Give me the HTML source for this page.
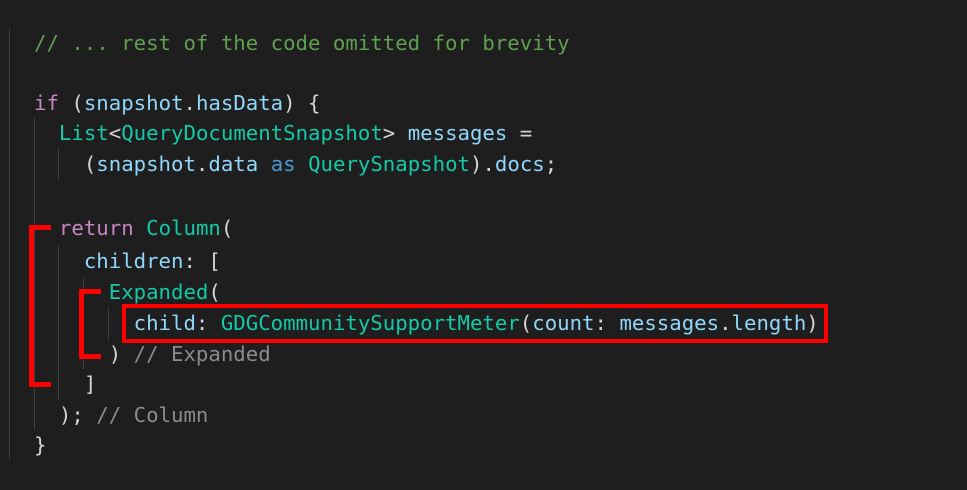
<!DOCTYPE html>
<html><head><style>
body{margin:0;background:#1e1e1e;width:967px;height:490px;overflow:hidden;position:relative;font-family:"DejaVu Sans Mono","Liberation Mono",monospace;font-size:20.7px;}
.l{position:absolute;left:34px;white-space:pre;height:30px;line-height:30px;color:#d4d4d4}
.c{color:#5f9f4f}.g{color:#8b8b8b}.k{color:#c586c0}.v{color:#8fd6fa}.t{color:#14c8a8}.b{color:#4a9ad6}
.ig{position:absolute;width:1px;background:#404040}
.r{position:absolute;background:#f00}
</style></head><body>
<div class="ig" style="left:9px;top:28px;height:432px"></div>
<div class="ig" style="left:34px;top:118px;height:312px"></div>
<div class="ig" style="left:58px;top:148px;height:32px"></div>
<div class="ig" style="left:58px;top:246px;height:154px"></div>
<div class="ig" style="left:83px;top:277px;height:92px"></div>
<div class="ig" style="left:108px;top:308px;height:32px"></div>
<div class="l" style="top:28px"><span class="c">// ... rest of the code omitted for brevity</span></div>
<div class="l" style="top:88px"><span class="k">if</span> (<span class="v">snapshot</span>.<span class="v">hasData</span>) {</div>
<div class="l" style="top:118px">  <span class="t">List</span>&lt;<span class="t">QueryDocumentSnapshot</span>&gt; <span class="v">messages</span> =</div>
<div class="l" style="top:149px">    (<span class="v">snapshot</span>.<span class="v">data</span> <span class="b">as</span> <span class="t">QuerySnapshot</span>).<span class="v">docs</span>;</div>
<div class="l" style="top:213px">  <span class="k">return</span> <span class="t">Column</span>(</div>
<div class="l" style="top:246px">    <span class="v">children</span>: [</div>
<div class="l" style="top:277px">      <span class="t">Expanded</span>(</div>
<div class="l" style="top:308px">        <span class="v">child</span>: <span class="t">GDGCommunitySupportMeter</span>(<span class="v">count</span>: <span class="v">messages</span>.<span class="v">length</span>)</div>
<div class="l" style="top:339px">      ) <span class="g">// Expanded</span></div>
<div class="l" style="top:369px">    ]</div>
<div class="l" style="top:400px">  ); <span class="g">// Column</span></div>
<div class="l" style="top:430px">}</div>
<div class="r" style="left:29px;top:225px;width:5px;height:162px"></div>
<div class="r" style="left:29px;top:225px;width:22px;height:5px"></div>
<div class="r" style="left:29px;top:382px;width:22px;height:5px"></div>
<div class="r" style="left:79px;top:289px;width:5px;height:70px"></div>
<div class="r" style="left:79px;top:289px;width:22px;height:5px"></div>
<div class="r" style="left:79px;top:354px;width:22px;height:5px"></div>
<div style="position:absolute;left:122px;top:304px;width:698px;height:31px;border:4px solid #f00"></div>
</body></html>
